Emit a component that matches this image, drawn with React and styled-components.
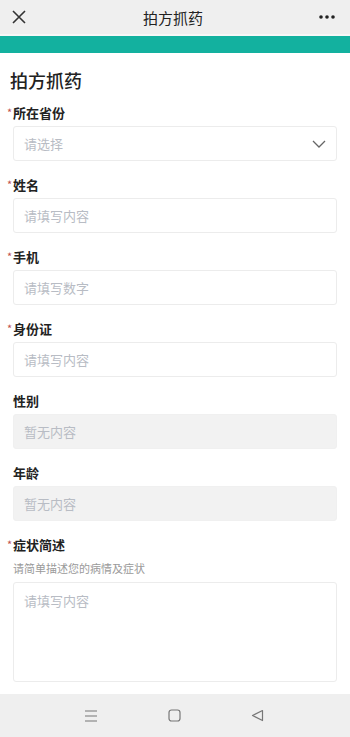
import styled, { createGlobalStyle } from "styled-components";

const Global = createGlobalStyle`
    body {
        margin: 0;
        background: #ffffff;
        font-family: "Noto Sans CJK SC", "Noto Sans", sans-serif;
    }
`;

const fields = [
    { label: "所在省份", required: true, placeholder: "请选择", select: true },
    { label: "姓名", required: true, placeholder: "请填写内容" },
    { label: "手机", required: true, placeholder: "请填写数字" },
    { label: "身份证", required: true, placeholder: "请填写内容" },
    { label: "性别", placeholder: "暂无内容", disabled: true },
    { label: "年龄", placeholder: "暂无内容", disabled: true },
];

const App = () => {
    return (
        <>
            <Global />
            <Page>
                <TopBar>
                    <IconBtn>
                        <svg width="16" height="16" viewBox="0 0 16 16">
                            <path d="M2 2 L14 14 M14 2 L2 14" stroke="#333" strokeWidth="1.6" fill="none" />
                        </svg>
                    </IconBtn>
                    <TopTitle>拍方抓药</TopTitle>
                    <IconBtn>
                        <svg width="18" height="6" viewBox="0 0 18 6">
                            <circle cx="3" cy="3" r="1.8" fill="#222" />
                            <circle cx="9" cy="3" r="1.8" fill="#222" />
                            <circle cx="15" cy="3" r="1.8" fill="#222" />
                        </svg>
                    </IconBtn>
                </TopBar>
                <Stripe />
                <Content>
                    <Heading>拍方抓药</Heading>
                    {fields.map((f) => (
                        <Field key={f.label}>
                            <Label>
                                {f.required && <Star>*</Star>}
                                {f.label}
                            </Label>
                            <Input $disabled={f.disabled}>
                                <span>{f.placeholder}</span>
                                {f.select && (
                                    <svg width="14" height="8" viewBox="0 0 14 8">
                                        <path d="M1 1 L7 7 L13 1" stroke="#666" strokeWidth="1.3" fill="none" />
                                    </svg>
                                )}
                            </Input>
                        </Field>
                    ))}
                    <Field>
                        <Label>
                            <Star>*</Star>症状简述
                        </Label>
                        <Hint>请简单描述您的病情及症状</Hint>
                        <TextArea>请填写内容</TextArea>
                    </Field>
                </Content>
                <NavBar>
                    <svg width="14" height="12" viewBox="0 0 14 12">
                        <path d="M1 1 H13 M1 6 H13 M1 11 H13" stroke="#777" strokeWidth="1.2" fill="none" />
                    </svg>
                    <svg width="13" height="13" viewBox="0 0 13 13">
                        <rect x="1" y="1" width="11" height="11" rx="2.5" stroke="#777" strokeWidth="1.2" fill="none" />
                    </svg>
                    <svg width="13" height="13" viewBox="0 0 13 13">
                        <path d="M11.5 1.5 L1.5 6.5 L11.5 11.5 Z" stroke="#777" strokeWidth="1.2" fill="none" strokeLinejoin="round" />
                    </svg>
                </NavBar>
            </Page>
        </>
    );
};

export default App;

const Page = styled.div`
    width: 350px;
    height: 737px;
    display: flex;
    flex-direction: column;
    overflow: hidden;
`;

const TopBar = styled.div`
    flex-shrink: 0;
    height: 34px;
    background: #efefef;
    border-bottom: 2px solid #f7f7f7;
    display: flex;
    align-items: center;
    justify-content: space-between;
    padding: 0 14px 0 10px;
`;

const IconBtn = styled.div`
    width: 18px;
    display: flex;
    align-items: center;
    justify-content: center;
`;

const TopTitle = styled.div`
    font-size: 15px;
    color: #222;
`;

const Stripe = styled.div`
    flex-shrink: 0;
    height: 17px;
    background: #13b19f;
`;

const Content = styled.div`
    flex: 1;
    min-height: 0;
    overflow: hidden;
    padding: 15px 13px 0 13px;
`;

const Heading = styled.div`
    font-size: 18px;
    line-height: 24px;
    color: #222;
    font-weight: 500;
    margin-left: -3px;
    margin-bottom: 11px;
`;

const Field = styled.div`
    margin-bottom: 14px;
`;

const Label = styled.div`
    font-size: 13px;
    line-height: 20px;
    font-weight: 700;
    color: #222;
    margin-bottom: 3px;
    position: relative;
`;

const Star = styled.span`
    position: absolute;
    left: -6px;
    top: -1px;
    color: #c0504d;
    font-size: 11px;
    font-weight: 400;
`;

const Input = styled.div`
    height: 35px;
    box-sizing: border-box;
    border: 1px solid ${(p) => (p.$disabled ? "#f0f0f0" : "#ececec")};
    border-radius: 3px;
    background: ${(p) => (p.$disabled ? "#f2f2f2" : "#ffffff")};
    display: flex;
    align-items: center;
    justify-content: space-between;
    padding: 0 10px;
    font-size: 13px;
    color: #b8bcc4;
`;

const Hint = styled.div`
    font-size: 11px;
    line-height: 16px;
    color: #9a9a9a;
    margin-top: 5px;
    margin-bottom: 6px;
`;

const TextArea = styled.div`
    height: 100px;
    box-sizing: border-box;
    border: 1px solid #ececec;
    border-radius: 3px;
    padding: 8px 10px;
    font-size: 13px;
    color: #b8bcc4;
`;

const NavBar = styled.div`
    flex-shrink: 0;
    height: 43px;
    background: #efefef;
    display: flex;
    align-items: center;
    justify-content: space-between;
    padding: 0 86px 0 84px;
`;
